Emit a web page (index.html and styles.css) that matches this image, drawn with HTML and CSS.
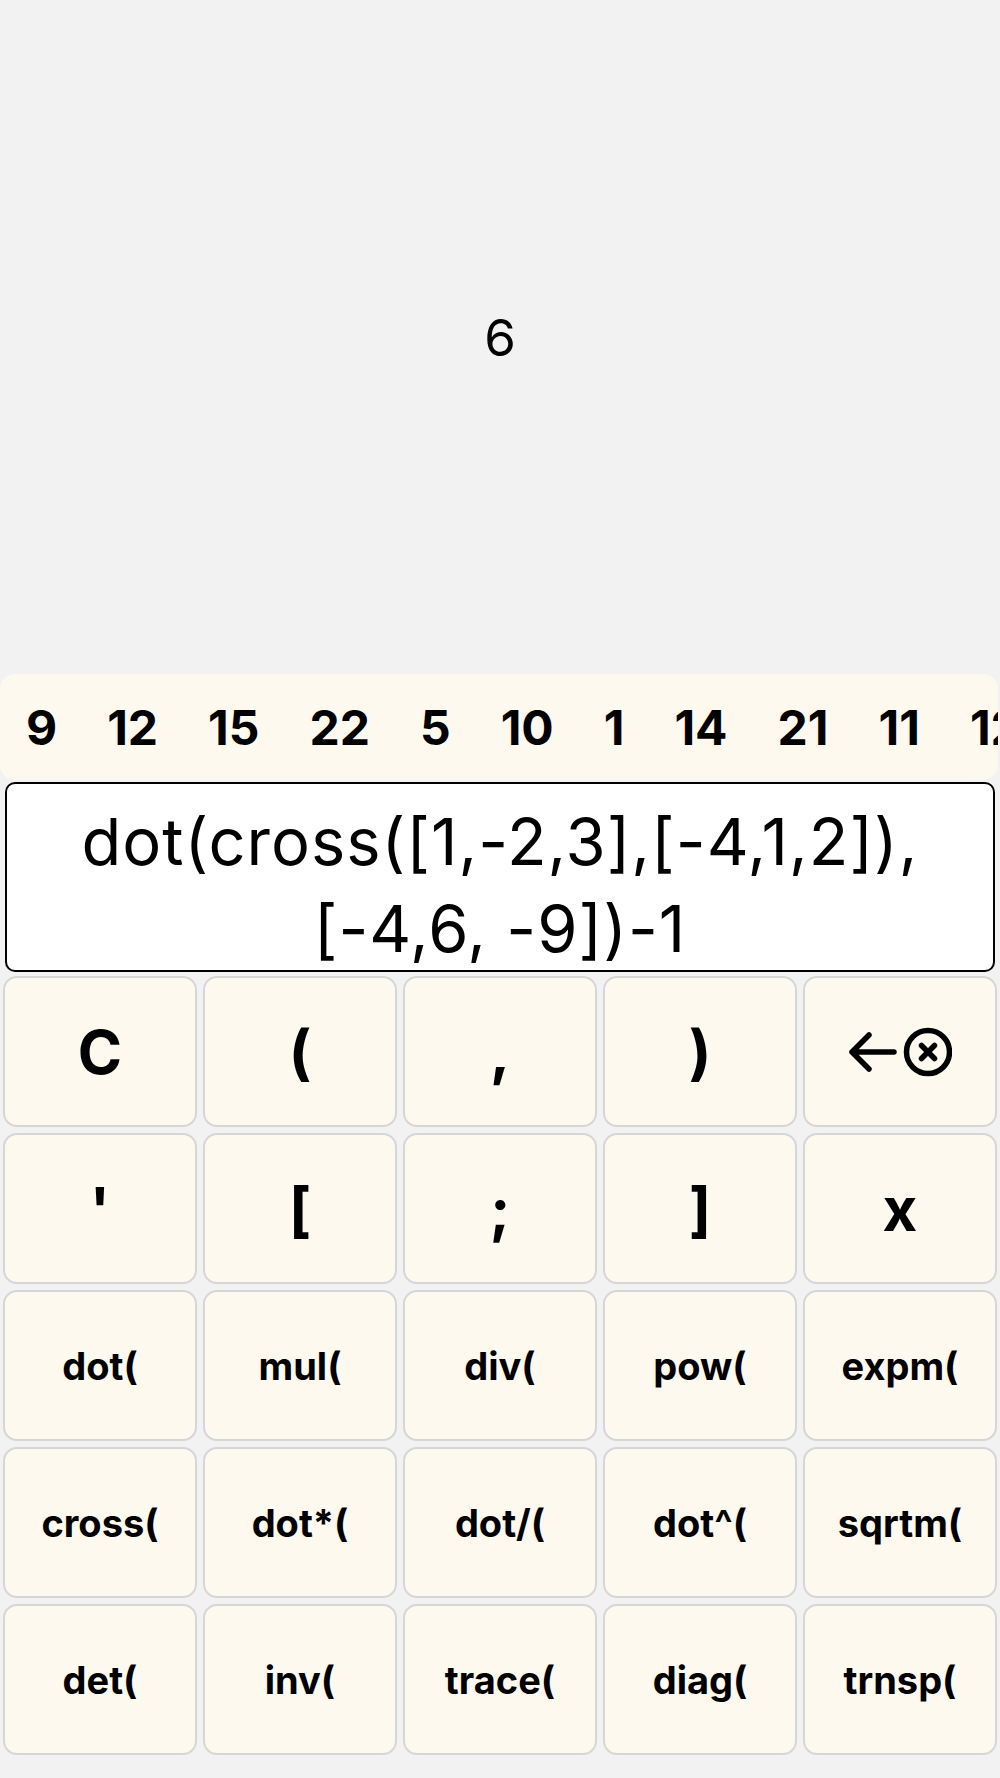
FILE: index.html
```html
<!DOCTYPE html>
<html lang="en">
<head>
    <meta charset="UTF-8">
    <meta name="viewport" content="width=device-width, initial-scale=1">
    <title>Matrix Calculator</title>
    <link rel="stylesheet" href="styles.css">
</head>
<body>
    <div class="app">
        <div class="result">6</div>

        <div class="history">
            <span class="history-item">9</span>
            <span class="history-item">12</span>
            <span class="history-item">15</span>
            <span class="history-item">22</span>
            <span class="history-item">5</span>
            <span class="history-item">10</span>
            <span class="history-item">1</span>
            <span class="history-item">14</span>
            <span class="history-item">21</span>
            <span class="history-item">11</span>
            <span class="history-item">12</span>
        </div>

        <div class="display">dot(cross([1,-2,3],[-4,1,2]), [-4,6, -9])-1</div>

        <div class="keypad">
            <button class="key key-big">C</button>
            <button class="key key-big">(</button>
            <button class="key key-big">,</button>
            <button class="key key-big">)</button>
            <button class="key key-big" aria-label="backspace">
                <svg width="104" height="50" viewBox="0 0 104 50" fill="none" stroke="#000" stroke-width="5.5" stroke-linecap="round" stroke-linejoin="round">
                    <path d="M46 25H4M21 8L4 25L21 42"/>
                    <circle cx="80" cy="25" r="21.5"/>
                    <path d="M73.5 18.5L86.5 31.5M86.5 18.5L73.5 31.5"/>
                </svg>
            </button>

            <button class="key key-big">'</button>
            <button class="key key-big">[</button>
            <button class="key key-big">;</button>
            <button class="key key-big">]</button>
            <button class="key key-big">x</button>

            <button class="key">dot(</button>
            <button class="key">mul(</button>
            <button class="key">div(</button>
            <button class="key">pow(</button>
            <button class="key">expm(</button>

            <button class="key">cross(</button>
            <button class="key">dot*(</button>
            <button class="key">dot/(</button>
            <button class="key">dot^(</button>
            <button class="key">sqrtm(</button>

            <button class="key">det(</button>
            <button class="key">inv(</button>
            <button class="key">trace(</button>
            <button class="key">diag(</button>
            <button class="key">trnsp(</button>
        </div>
    </div>
</body>
</html>
```

FILE: styles.css
```css
body {
    margin: 0;
    background: #f2f2f2;
    font-family: Inter, "Liberation Sans", sans-serif;
    color: #000;
}
.app {
    display: flex;
    flex-direction: column;
    height: 1778px;
}
.result {
    height: 674px;
    display: flex;
    align-items: center;
    justify-content: center;
    font-size: 51px;
}
.history {
    height: 106px;
    margin-right: 2px;
    background: #fdf9ef;
    border-radius: 15px;
    display: flex;
    align-items: center;
    overflow: hidden;
    white-space: nowrap;
    padding-left: 1px;
}
.history-item {
    padding: 0 25px;
    font-size: 48px;
    font-weight: 700;
}
.display {
    margin: 2px 5px 0;
    height: 190px;
    box-sizing: border-box;
    padding: 14px 6px 0;
    background: #fff;
    border: 2px solid #000;
    border-radius: 10px;
    text-align: center;
    font-size: 65px;
    letter-spacing: 1px;
    line-height: 87px;
    overflow: hidden;
}
.keypad {
    display: grid;
    grid-template-columns: repeat(5, 1fr);
    grid-auto-rows: 151px;
    gap: 6px;
    padding: 4px 3px 0;
}
.key {
    background: #fdf9ef;
    border: 2px solid #d6d6d6;
    border-radius: 14px;
    font-family: inherit;
    font-size: 38px;
    font-weight: 700;
    color: #000;
    padding: 0;
    display: flex;
    align-items: center;
    justify-content: center;
}
.key-big {
    font-size: 60px;
}
```
